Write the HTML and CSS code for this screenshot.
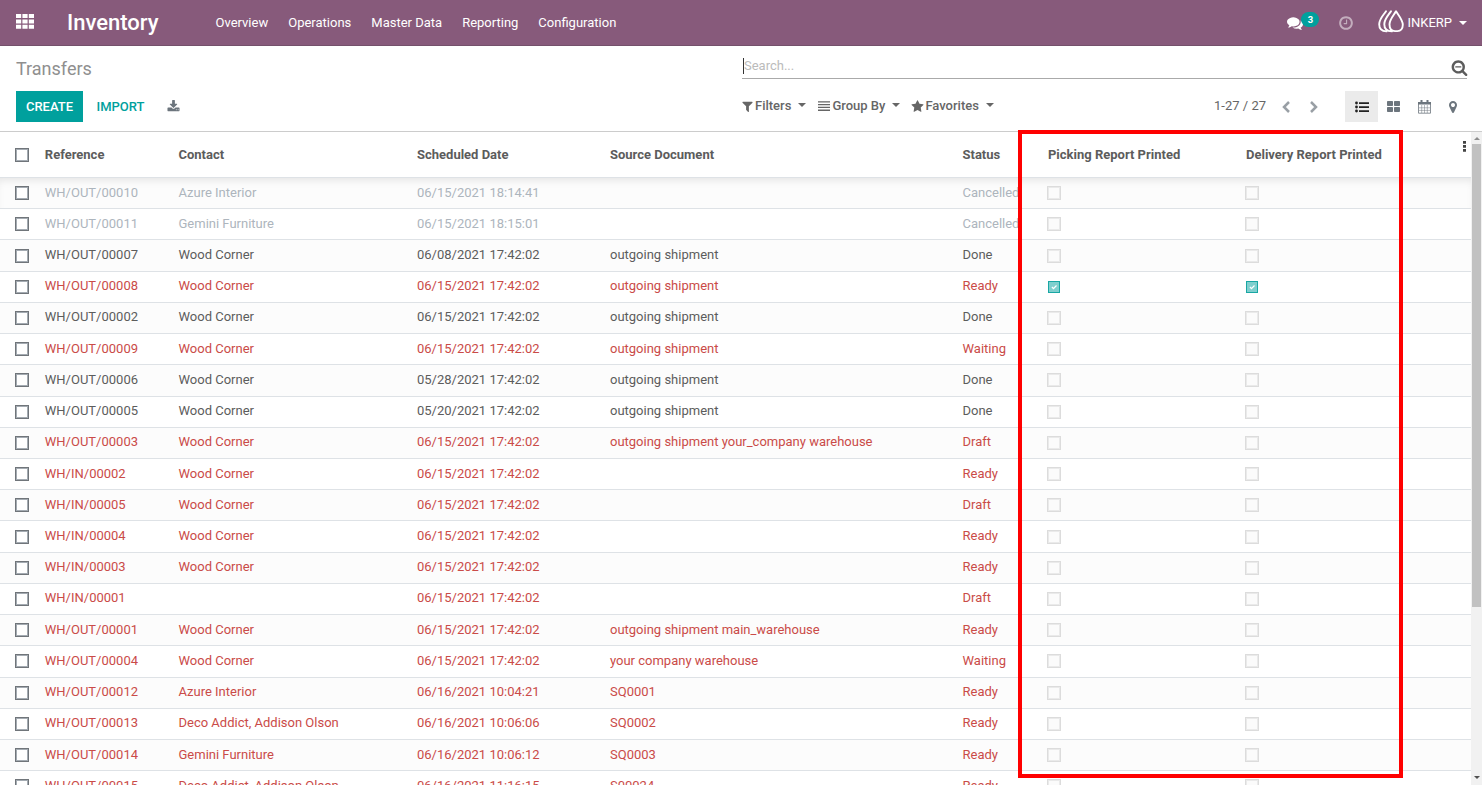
FILE: index.html
```html
<!DOCTYPE html>
<html lang="en">
<head>
<meta charset="utf-8">
<title>Transfers - Inventory</title>
<link rel="stylesheet" href="styles.css">
</head>
<body>
<header class="navbar">
  <svg class="apps" viewBox="0 0 18 15"><path d="M0 0h5.2v4H0zM6.4 0h5.2v4H6.4zM12.8 0H18v4h-5.2zM0 5.4h5.2v4H0zM6.4 5.4h5.2v4H6.4zM12.8 5.4H18v4h-5.2zM0 10.8h5.2v4H0zM6.4 10.8h5.2v4H6.4zM12.8 10.8H18v4h-5.2z"/></svg>
  <div class="brand">Inventory</div>
  <nav class="menu"><a>Overview</a><a>Operations</a><a>Master Data</a><a>Reporting</a><a>Configuration</a></nav>
  <div class="systray">
    <svg class="chat" viewBox="0 0 1792 1792"><path d="M1408 768q0 139-94 257t-256.5 186.5-353.500 68.500q-86 0-176-16-124 88-278 128-36 9-86 16h-3q-11 0-20.500-8t-11.500-21q-1-3-1-6.500t.5-6.500 2-6l2.500-5 3.500-5.500 4-5 4.500-5 4-4.500q5-6 23-25t26-29.500 22.500-29 25-38.500 20.500-44q-124-72-195-177t-71-224q0-139 94-257t256.500-186.500 353.500-68.500 353.500 68.500 256.500 186.500 94 257zm384 256q0 120-71 224.500t-195 176.500q10 24 20.500 44t25 38.500 22.500 29 26 29.500 23 25q1 1 4 4.500t4.500 5 4 5 3.500 5.500l2.500 5 2 6 .5 6.500-1 6.500q-3 14-13 22t-22 7q-50-7-86-16-154-40-278-128-90 16-176 16-271 0-472-132 58 4 88 4 161 0 309-45t264-129q125-92 192-212t67-254q0-77-23-152 129 71 204 178t75 230z"/></svg>
    <span class="badge">3</span>
    <svg class="clock" viewBox="0 0 1792 1792"><path d="M1024 544v448q0 14-9 23t-23 9h-320q-14 0-23-9t-9-23v-64q0-14 9-23t23-9h224v-352q0-14 9-23t23-9h64q14 0 23 9t9 23zm416 352q0-148-73-273t-198-198-273-73-273 73-198 198-73 273 73 273 198 198 273 73 273-73 198-198 73-273zm224 0q0 209-103 385.500t-279.500 279.500-385.500 103-385.500-103-279.500-279.500-103-385.500 103-385.500 279.500-279.500 385.500-103 385.500 103 279.500 279.500 103 385.500z"/></svg>
    <svg class="logo" viewBox="0 0 26 23"><path d="M18 1.300C16 5 11.500 9.500 11.500 14.200c0 4.400 2.300 6.900 5.500 6.900h2.500c3.200 0 5.300-2.600 5.300-6.300C24.800 10 20.300 5 18 1.300zM13 1.200C10.500 5 6.300 9 6.300 14.200c0 4.500 3 7 7.500 7.200M8 1.200C5.500 5 1.200 9 1.200 14.200c0 4.500 2.800 7 7.300 7.200"/></svg>
    <span class="user">INKERP</span><i class="caret"></i>
  </div>
</header>

<section class="panel">
  <div class="left">
    <h1>Transfers</h1>
    <div class="buttons">
      <button class="create">CREATE</button><button class="import">IMPORT</button>
      <svg class="download" viewBox="0 0 1792 1792"><path d="M1344 1344q0-26-19-45t-45-19-45 19-19 45 19 45 45 19 45-19 19-45zm256 0q0-26-19-45t-45-19-45 19-19 45 19 45 45 19 45-19 19-45zm128-224v320q0 40-28 68t-68 28h-1472q-40 0-68-28t-28-68v-320q0-40 28-68t68-28h465l135 136q58 56 136 56t136-56l136-136h464q40 0 68 28t28 68zm-325-569q17 41-14 70l-448 448q-18 19-45 19t-45-19l-448-448q-31-29-14-70 17-39 59-39h256v-448q0-26 19-45t45-19h256q26 0 45 19t19 45v448h256q42 0 59 39z"/></svg>
    </div>
  </div>
  <div class="right">
    <div class="search"><span class="query">Search...</span>
      <svg class="magnifier" viewBox="0 0 1792 1792"><path d="M1088 800v64q0 13-9.500 22.500t-22.500 9.500h-576q-13 0-22.500-9.500t-9.500-22.500v-64q0-13 9.500-22.500t22.500-9.500h576q13 0 22.500 9.500t9.500 22.500zm128 32q0-185-131.500-316.500t-316.500-131.500-316.500 131.500-131.500 316.500 131.500 316.500 316.500 131.500 316.500-131.500 131.500-316.500zm512 832q0 53-37.500 90.500t-90.500 37.500q-54 0-90-38l-343-342q-179 124-399 124-143 0-273.500-55.500t-225-150-150-225-55.500-273.500 55.500-273.500 150-225 225-150 273.500-55.500 273.500 55.500 225 150 150 225 55.500 273.500q0 220-124 399l343 343q37 37 37 90z"/></svg>
    </div>
    <div class="tools">
      <div class="filters">
        <span class="option filter"><svg viewBox="0 0 1792 1792"><path d="M1595 295q17 41-14 70l-493 493v742q0 42-39 59-13 5-25 5-27 0-45-19l-256-256q-19-19-19-45v-486l-493-493q-31-29-14-70 17-39 59-39h1280q42 0 59 39z"/></svg>Filters<i class="caret"></i></span>
        <span class="option group"><svg viewBox="0 0 12 12"><path d="M0 1.200h12v1.300H0zM0 4h12v1.300H0zM0 6.800h12v1.300H0zM0 9.600h12v1.300H0z"/></svg>Group By<i class="caret"></i></span>
        <span class="option favorite"><svg viewBox="0 0 1792 1792"><path d="M1728 647q0 22-26 48l-363 354 86 500q1 7 1 20 0 21-10.500 35.500t-30.500 14.500q-19 0-40-12l-449-236-449 236q-22 12-40 12-21 0-31.500-14.500t-10.500-35.500q0-6 2-20l86-500-364-354q-25-27-25-48 0-37 56-46l502-73 225-455q19-41 49-41t49 41l225 455 502 73q56 9 56 46z"/></svg>Favorites<i class="caret"></i></span>
      </div>
      <div class="views">
        <span class="count">1-27 / 27</span>
        <svg class="chevron prev" viewBox="0 0 8 12"><path d="M7 1L2 6l5 5"/></svg>
        <svg class="chevron next" viewBox="0 0 8 12"><path d="M1 1l5 5-5 5"/></svg>
        <span class="active"><svg viewBox="0 0 14 12"><path d="M4 1.200h10v1.700H4zM4 5.200h10v1.700H4zM4 9.200h10v1.700H4z"/><circle cx="1.500" cy="2" r="1.400"/><circle cx="1.500" cy="6" r="1.400"/><circle cx="1.500" cy="10" r="1.400"/></svg></span>
        <svg class="kanban" viewBox="0 0 13 11"><path d="M.8 0H5.200q.8 0 .8.800V4.200q0 .8-.8.800H.8Q0 5 0 4.200V.8Q0 0 .8 0zM7.800 0h4.400q.8 0 .8.800v3.400q0 .8-.8.800H7.800Q7 5 7 4.200V.8q0-.8.8-.8zM.8 6h4.400q.8 0 .8.800v3.400q0 .8-.8.800H.8q-.8 0-.8-.8V6.800Q0 6 .8 6zM7.800 6h4.400q.8 0 .8.800v3.400q0 .8-.8.800H7.800q-.8 0-.8-.8V6.800q0-.8.8-.8z"/></svg>
        <svg class="calendar" viewBox="0 0 13 14"><path class="grid" d="M1 7.800h11M1 10.400h11M3.700 5v8M6.500 5v8M9.300 5v8"/><path class="frame" d="M.5 2.500h12v10.700H.5z"/><path d="M0 2h13v2.600H0zM2.500 0h2v3.500h-2zM8.500 0h2v3.500h-2z"/></svg>
        <svg class="marker" viewBox="384 128 1024 1536"><path d="M1152 640q0-106-75-181t-181-75-181 75-75 181 75 181 181 75 181-75 75-181zm256 0q0 109-33 179l-364 774q-16 33-47.500 52t-67.500 19-67.500-19-46.500-52l-365-774q-33-70-33-179 0-212 150-362t362-150 362 150 150 362z"/></svg>
      </div>
    </div>
  </div>
</section>

<main class="content">
  <div class="list">
    <div class="row head"><i class="box"></i><b>Reference</b><b>Contact</b><b>Scheduled Date</b><b>Source Document</b><b>Status</b><b>Picking Report Printed</b><b>Delivery Report Printed</b>
      <svg class="dots" viewBox="0 0 3 11"><path d="M0 0h3v2.700H0zM0 4h3v2.700H0zM0 8h3v2.700H0z"/></svg></div>
    <div class="rows">
      <div class="row muted"><i class="box"></i><span>WH/OUT/00010</span><span>Azure Interior</span><span>06/15/2021 18:14:41</span><span></span><span>Cancelled</span><i class="box off"></i><i class="box off"></i></div>
      <div class="row muted"><i class="box"></i><span>WH/OUT/00011</span><span>Gemini Furniture</span><span>06/15/2021 18:15:01</span><span></span><span>Cancelled</span><i class="box off"></i><i class="box off"></i></div>
      <div class="row"><i class="box"></i><span>WH/OUT/00007</span><span>Wood Corner</span><span>06/08/2021 17:42:02</span><span>outgoing shipment</span><span>Done</span><i class="box off"></i><i class="box off"></i></div>
      <div class="row late"><i class="box"></i><span>WH/OUT/00008</span><span>Wood Corner</span><span>06/15/2021 17:42:02</span><span>outgoing shipment</span><span>Ready</span><svg class="checked" viewBox="0 0 12 12"><path d="M3.500 6l1.900 1.900L9 4.200"/></svg><svg class="checked" viewBox="0 0 12 12"><path d="M3.500 6l1.900 1.900L9 4.200"/></svg></div>
      <div class="row"><i class="box"></i><span>WH/OUT/00002</span><span>Wood Corner</span><span>06/15/2021 17:42:02</span><span>outgoing shipment</span><span>Done</span><i class="box off"></i><i class="box off"></i></div>
      <div class="row late"><i class="box"></i><span>WH/OUT/00009</span><span>Wood Corner</span><span>06/15/2021 17:42:02</span><span>outgoing shipment</span><span>Waiting</span><i class="box off"></i><i class="box off"></i></div>
      <div class="row"><i class="box"></i><span>WH/OUT/00006</span><span>Wood Corner</span><span>05/28/2021 17:42:02</span><span>outgoing shipment</span><span>Done</span><i class="box off"></i><i class="box off"></i></div>
      <div class="row"><i class="box"></i><span>WH/OUT/00005</span><span>Wood Corner</span><span>05/20/2021 17:42:02</span><span>outgoing shipment</span><span>Done</span><i class="box off"></i><i class="box off"></i></div>
      <div class="row late"><i class="box"></i><span>WH/OUT/00003</span><span>Wood Corner</span><span>06/15/2021 17:42:02</span><span>outgoing shipment your_company warehouse</span><span>Draft</span><i class="box off"></i><i class="box off"></i></div>
      <div class="row late"><i class="box"></i><span>WH/IN/00002</span><span>Wood Corner</span><span>06/15/2021 17:42:02</span><span></span><span>Ready</span><i class="box off"></i><i class="box off"></i></div>
      <div class="row late"><i class="box"></i><span>WH/IN/00005</span><span>Wood Corner</span><span>06/15/2021 17:42:02</span><span></span><span>Draft</span><i class="box off"></i><i class="box off"></i></div>
      <div class="row late"><i class="box"></i><span>WH/IN/00004</span><span>Wood Corner</span><span>06/15/2021 17:42:02</span><span></span><span>Ready</span><i class="box off"></i><i class="box off"></i></div>
      <div class="row late"><i class="box"></i><span>WH/IN/00003</span><span>Wood Corner</span><span>06/15/2021 17:42:02</span><span></span><span>Ready</span><i class="box off"></i><i class="box off"></i></div>
      <div class="row late"><i class="box"></i><span>WH/IN/00001</span><span></span><span>06/15/2021 17:42:02</span><span></span><span>Draft</span><i class="box off"></i><i class="box off"></i></div>
      <div class="row late"><i class="box"></i><span>WH/OUT/00001</span><span>Wood Corner</span><span>06/15/2021 17:42:02</span><span>outgoing shipment main_warehouse</span><span>Ready</span><i class="box off"></i><i class="box off"></i></div>
      <div class="row late"><i class="box"></i><span>WH/OUT/00004</span><span>Wood Corner</span><span>06/15/2021 17:42:02</span><span>your company warehouse</span><span>Waiting</span><i class="box off"></i><i class="box off"></i></div>
      <div class="row late"><i class="box"></i><span>WH/OUT/00012</span><span>Azure Interior</span><span>06/16/2021 10:04:21</span><span>SQ0001</span><span>Ready</span><i class="box off"></i><i class="box off"></i></div>
      <div class="row late"><i class="box"></i><span>WH/OUT/00013</span><span>Deco Addict, Addison Olson</span><span>06/16/2021 10:06:06</span><span>SQ0002</span><span>Ready</span><i class="box off"></i><i class="box off"></i></div>
      <div class="row late"><i class="box"></i><span>WH/OUT/00014</span><span>Gemini Furniture</span><span>06/16/2021 10:06:12</span><span>SQ0003</span><span>Ready</span><i class="box off"></i><i class="box off"></i></div>
      <div class="row late"><i class="box"></i><span>WH/OUT/00015</span><span>Deco Addict, Addison Olson</span><span>06/16/2021 11:16:15</span><span>S00024</span><span>Ready</span><i class="box off"></i><i class="box off"></i></div>
    </div>
  </div>
  <div class="scrollbar"><i class="up"></i><div class="thumb"></div><i class="down"></i></div>
</main>
<div class="highlight"></div>
</body>
</html>
```
FILE: styles.css
```css
* { box-sizing: border-box; }
body { margin: 0; height: 785px; overflow: hidden; display: flex; flex-direction: column; background: #fff; color: #5c5c5c; font: 13px/20px Roboto, sans-serif; position: relative; }
svg { display: block; fill: currentColor; flex: none; }

.navbar { height: 46px; flex: none; display: flex; align-items: center; padding: 0 15px 0 16px; background: #875a7b; border-bottom: 1px solid #74516b; color: #fff; }
.apps { width: 18px; height: 15px; margin-bottom: 2px; }
.brand { width: 148.500px; margin-left: 33px; font-size: 22px; font-weight: 500; line-height: 30px; }
.menu { display: flex; gap: 20px; }
.systray { margin-left: auto; display: flex; align-items: center; }
.chat { width: 16px; height: 16px; }
.badge { width: 18px; height: 15px; margin: 0 19px 6px -2px; border-radius: 8px; background: #00a09d; font-size: 9.500px; font-weight: 700; line-height: 15px; text-align: center; }
.clock { width: 16px; height: 16px; margin-right: 24px; opacity: .5; }
.logo { width: 26px; height: 23px; margin: 0 3px 2px 0; fill: none; stroke: #fff; stroke-width: 1.900; stroke-linecap: round; stroke-linejoin: round; }
.caret { width: 0; height: 0; border: 4px solid transparent; border-top-color: currentColor; border-bottom: 0; }
.user + .caret { margin-left: 7px; }

.panel { height: 86px; flex: none; display: flex; border-bottom: 1px solid #ccc; }
.left { width: 742px; padding: 12px 0 0 16px; }
h1 { margin: 0; font-size: 18px; font-weight: 400; line-height: 22px; color: #8f8f8f; }
.buttons { display: flex; align-items: center; margin-top: 11px; }
button { height: 31px; padding: 0 0 1px; border: 0; font: 500 13px Roboto, sans-serif; }
.create { width: 67px; background: #00a09d; color: #fff; }
.import { width: 75px; background: none; color: #00a09d; }
.download { width: 13px; height: 13px; margin-left: 9px; color: #6c757d; }
.right { width: 725px; }
.search { display: flex; height: 33px; border-bottom: 1px solid #aaa; }
.query { height: 16px; margin: 12px 0 0 1px; border-left: 1px solid #333; color: #bbb; line-height: 16px; }
.magnifier { width: 17px; height: 17px; margin: 13px -1px 0 auto; }
.tools { display: flex; justify-content: space-between; align-items: center; height: 31px; margin-top: 12px; }
.filters, .views, .option { display: flex; align-items: center; }
.filters { margin: 0 0 1px -1px; }
.option { font-weight: 500; color: #666; }
.option svg { width: 13px; height: 13px; margin-right: 1px; }
.group svg { width: 12px; height: 12px; margin-right: 2px; }
.option .caret { margin: 0 12px 2px 7px; border-width: 4px 4px 0; }
.favorite { margin-left: -1px; }
.views { margin-right: -1px; color: #6c757d; }
.count { margin: 0 16px 1px 0; color: #666; }
.chevron { width: 8px; height: 12px; fill: none; stroke: #999fa5; stroke-width: 2.500; }
.next { margin-left: 20px; }
.active { display: grid; place-items: center; width: 33px; height: 31px; margin: 0 9px 0 27px; background: #ebebeb; color: #222; }
.active svg { width: 14px; height: 12px; }
.kanban { width: 13px; height: 11px; }
.calendar { width: 13px; height: 14px; margin-left: 18px; }
.grid, .frame { fill: none; stroke: currentColor; }
.frame { stroke-width: .8; }
.grid { stroke-width: .5; }
.marker { width: 8px; height: 12px; margin: 0 11px 0 18px; }

.content { flex: 1; min-height: 0; display: flex; }
.list { flex: 1; overflow: hidden; }
.row { display: grid; grid-template-columns: 29.800px 133.700px 238.500px 193px 352.500px 85.500px 198px 1fr; align-items: center; height: 31.220px; padding: 0 0 1px 15px; border-bottom: 1px solid #dee2e6; white-space: nowrap; }
.rows .row:nth-child(odd) { background: #fcfcfc; }
.rows .row:first-child { box-shadow: inset 0 6px 8px -4px #0000001a; }
.row.head { grid-template-columns: 29.800px 133.700px 238.500px 193px 352.500px 85.500px 198px 1fr auto; height: 46px; padding-bottom: 0; }
.head b { font-weight: 700; }
.dots { align-self: start; width: 3px; height: 11px; margin: 9px 5px 0 0; color: #444; }
.box { width: 14px; height: 14px; margin-top: 1px; border: 1px solid #70757a; background: #fff; box-shadow: inset 0 0 0 1px #a4abb2; }
.off { border-color: #dcdcdc; margin-left: -1px; background: #fbfbfb; box-shadow: inset 0 0 0 1px #eaeaea; }
.checked { width: 12px; height: 12px; margin-top: 2px; border: 1px solid #19a7a4; background: #80cfce; fill: none; stroke: #fff; stroke-width: 1.500; }
.muted { color: #adb5bd; }
.late { color: #ca4b48; }
.scrollbar { width: 11px; display: flex; flex-direction: column; align-items: center; background: #f1f1f1; }
.up { margin: 5px 0 4px; border: 3px solid transparent; border-top: 0; border-bottom-color: #8c8c8c; }
.thumb { width: 9px; height: 463px; background: #c1c1c1; }
.down { margin: auto 0 6px; border: 3px solid transparent; border-bottom: 0; border-top-color: #505050; }
.highlight { position: absolute; left: 1018px; top: 130px; width: 385px; height: 648px; border: 4px solid #f00; }
```
